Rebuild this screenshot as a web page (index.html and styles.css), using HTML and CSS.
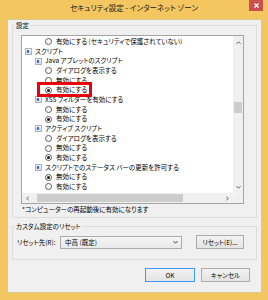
FILE: index.html
```html
<!DOCTYPE html>
<html lang="ja">

<head>
  <meta charset="UTF-8">
  <title>セキュリティ設定 - インターネット ゾーン</title>
  <link rel="stylesheet" href="styles.css">
</head>

<body>
  <div class="window">
    <div class="titlebar">
      <span></span>
      <div class="title">セキュリティ設定 - インターネット ゾーン</div>
      <button class="close-button">
        <svg width="5" height="5" viewBox="0 0 5 5"><path d="M0.5 0.5L4.5 4.5M4.5 0.5L0.5 4.5" stroke="#fff" stroke-width="1.3"/></svg>
      </button>
    </div>

    <div class="client">
      <fieldset class="group settings">
        <legend>設定</legend>
        <div class="listbox">
          <div class="list-content">
            <div class="row option"><span class="radio"></span>有効にする (セキュリティで保護されていない)</div>
            <div class="row level-1"><span class="item-icon"></span>スクリプト</div>
            <div class="row level-2"><span class="item-icon"></span>Java アプレットのスクリプト</div>
            <div class="row option"><span class="radio"></span>ダイアログを表示する</div>
            <div class="row option"><span class="radio"></span>無効にする</div>
            <div class="row option"><span class="radio checked"></span>有効にする</div>
            <div class="row level-2"><span class="item-icon"></span>XSS フィルターを有効にする</div>
            <div class="row option"><span class="radio"></span>無効にする</div>
            <div class="row option"><span class="radio checked"></span>有効にする</div>
            <div class="row level-2"><span class="item-icon"></span>アクティブ スクリプト</div>
            <div class="row option"><span class="radio"></span>ダイアログを表示する</div>
            <div class="row option"><span class="radio"></span>無効にする</div>
            <div class="row option"><span class="radio checked"></span>有効にする</div>
            <div class="row level-2"><span class="item-icon"></span>スクリプトでのステータス バーの更新を許可する</div>
            <div class="row option"><span class="radio checked"></span>無効にする</div>
            <div class="row option"><span class="radio"></span>有効にする</div>
            <!-- red annotation frame -->
            <div class="highlight"></div>
          </div>
          <div class="vscroll">
            <div class="scroll-arrow vertical"><svg width="5" height="3" viewBox="0 0 5 3"><path d="M0.5 2.8L2.5 0.8L4.5 2.8" fill="none" stroke="#606060"/></svg></div>
            <div class="vthumb"></div>
            <div class="scroll-arrow vertical bottom"><svg width="5" height="3" viewBox="0 0 5 3"><path d="M0.5 0.2L2.5 2.2L4.5 0.2" fill="none" stroke="#606060"/></svg></div>
          </div>
          <div class="hscroll">
            <div class="scroll-arrow horizontal"><svg width="3" height="5" viewBox="0 0 3 5"><path d="M2.8 0.5L0.8 2.5L2.8 4.5" fill="none" stroke="#606060"/></svg></div>
            <div class="hthumb"></div>
            <div class="scroll-arrow horizontal right"><svg width="3" height="5" viewBox="0 0 3 5"><path d="M0.2 0.5L2.2 2.5L0.2 4.5" fill="none" stroke="#606060"/></svg></div>
          </div>
          <div class="corner"></div>
        </div>
        <p class="note">*コンピューターの再起動後に有効になります</p>
      </fieldset>

      <fieldset class="group reset">
        <legend>カスタム設定のリセット</legend>
        <div class="reset-row">
          <label class="reset-label">リセット先(R):</label>
          <div class="select">
            <span>中高 (既定)</span>
            <svg width="5" height="3" viewBox="0 0 5 3"><path d="M0.5 0.2L2.5 2.2L4.5 0.2" fill="none" stroke="#333"/></svg>
          </div>
          <button class="button reset-button">リセット(E)...</button>
        </div>
      </fieldset>

      <div class="dialog-buttons">
        <button class="button default ok-button">OK</button>
        <button class="button cancel-button">キャンセル</button>
      </div>
    </div>
  </div>
</body>

</html>
```

FILE: styles.css
```css
body {
  margin: 0;
  font-family: "Noto Sans CJK JP", sans-serif;
  font-feature-settings: "palt";
  font-size: 6.5px;
  color: #000;
}

.window {
  width: 268px;
  height: 300px;
  background-color: #f4c660;
  display: flex;
  flex-direction: column;
}

/* title bar */
.titlebar {
  height: 19px;
  display: grid;
  grid-template-columns: 1fr auto 1fr;
  align-items: start;
}

.title {
  font-size: 7.5px;
  line-height: 15px;
  color: #1a1a1a;
}

.close-button {
  justify-self: end;
  margin-right: 5px;
  width: 14px;
  height: 11px;
  padding: 0;
  border: none;
  background-color: #c9504e;
  display: flex;
  align-items: center;
  justify-content: center;
}

.client {
  flex: 1;
  margin: 0 6px 7px 7px;
  padding: 0 4px;
  background-color: #f0f0f0;
  border: 1px solid #d8c998;
  display: flex;
  flex-direction: column;
}

/* group boxes */
.group {
  margin: 0;
  border: 1px solid #dcdcdc;
  min-width: 0;
}

.group legend {
  line-height: 9px;
  padding: 0 1px;
}

.settings {
  margin-top: 1px;
  padding: 5px 8px 3px 8px;
}

.settings legend {
  margin-left: -6px;
}

.listbox {
  width: 223px;
  height: 169px;
  box-sizing: border-box;
  border: 1px solid #a5a5a5;
  background-color: #fff;
  display: grid;
  grid-template-columns: 1fr 10px;
  grid-template-rows: 1fr 10px;
}

.list-content {
  position: relative;
  overflow: hidden;
  padding-top: 1px;
}

.row {
  height: 9.67px;
  line-height: 9.67px;
  display: flex;
  align-items: center;
  white-space: nowrap;
}

.level-1 {
  padding-left: 3px;
}

.level-2 {
  padding-left: 13px;
}

.option {
  padding-left: 23px;
}

.item-icon {
  width: 7px;
  height: 7px;
  margin-right: 3px;
  box-sizing: border-box;
  border: 1px solid #a9b4c2;
  background:
    radial-gradient(circle at 40% 45%, #3d6fc0 0 1.3px, transparent 1.6px),
    linear-gradient(#f2f4f8, #d7dde6);
}

.radio {
  width: 7px;
  height: 7px;
  margin-right: 4px;
  box-sizing: border-box;
  border: 1px solid #5a5a5a;
  border-radius: 50%;
  background-color: #fff;
  display: flex;
  align-items: center;
  justify-content: center;
}

.radio.checked::after {
  content: "";
  width: 3px;
  height: 3px;
  border-radius: 50%;
  background-color: #1a1a1a;
}

/* red annotation frame */
.highlight {
  position: absolute;
  left: 15px;
  top: 46px;
  width: 55px;
  height: 15px;
  box-sizing: border-box;
  border: 3px solid #e8000b;
}

/* scroll bars */
.vscroll {
  background-color: #f0f0f0;
  display: flex;
  flex-direction: column;
}

.hscroll {
  background-color: #f0f0f0;
  display: flex;
}

.corner {
  background-color: #f0f0f0;
}

.scroll-arrow {
  display: flex;
  align-items: center;
  justify-content: center;
}

.scroll-arrow.vertical {
  height: 12px;
}

.scroll-arrow.bottom {
  margin-top: auto;
  height: 11px;
}

.scroll-arrow.horizontal {
  width: 10px;
}

.scroll-arrow.right {
  margin-left: auto;
  width: 12px;
}

.vthumb {
  margin: 54px 1px 0 1px;
  height: 11px;
  background-color: #cdcdcd;
}

.hthumb {
  margin: 1px 0 1px 5px;
  width: 146px;
  background-color: #cdcdcd;
}

.note {
  margin: 1px 0 0 1px;
  line-height: 9px;
  white-space: nowrap;
}

/* reset group */
.reset {
  margin-top: 4px;
  padding: 4px 0 10px 4px;
}

.reset legend {
  margin-left: -2px;
}

.reset-row {
  display: flex;
  align-items: center;
  height: 14px;
}

.reset-label {
  width: 43px;
  white-space: nowrap;
}

.select {
  width: 122px;
  height: 13px;
  box-sizing: border-box;
  margin-right: 14px;
  padding: 0 3px 0 4px;
  border: 1px solid #acacac;
  background: linear-gradient(#f5f5f5, #e9e9e9);
  display: flex;
  align-items: center;
  justify-content: space-between;
}

.button {
  font-family: inherit;
  font-feature-settings: inherit;
  font-size: 6.5px;
  color: #000;
  height: 14px;
  box-sizing: border-box;
  padding: 0;
  border: 1px solid #acacac;
  background: linear-gradient(#f2f2f2, #e4e4e4);
}

.button.default {
  border-color: #3c9af0;
}

.reset-button {
  width: 48px;
}

.dialog-buttons {
  display: flex;
  justify-content: flex-end;
  gap: 6px;
  margin-top: 8px;
  padding-right: 7px;
}

.ok-button {
  width: 50px;
}

.cancel-button {
  width: 49px;
}
```
